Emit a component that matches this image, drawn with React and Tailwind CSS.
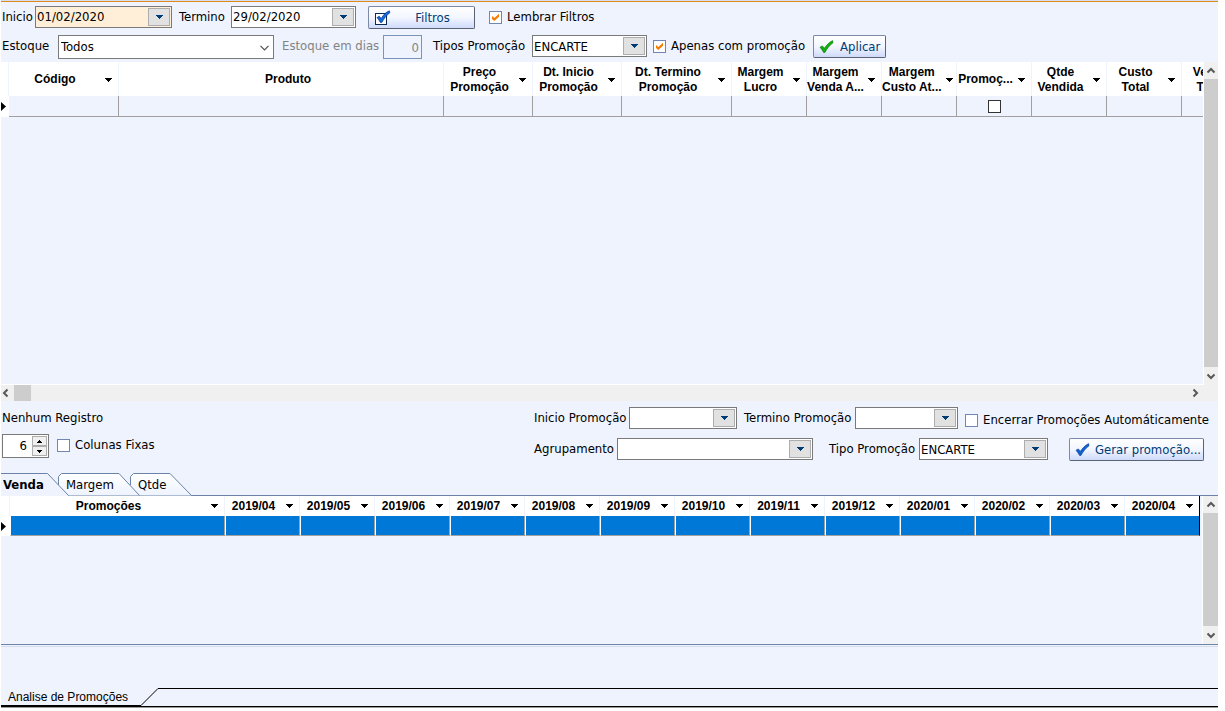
import React, { useState } from 'react';

const productColumns = [
  { lines: ['Código'], width: 'w-[110px]', menu: true },
  { lines: ['Produto'], width: 'w-[325px]', menu: false },
  { lines: ['Preço', 'Promoção'], width: 'w-[89px]', menu: true },
  { lines: ['Dt. Inicio', 'Promoção'], width: 'w-[89px]', menu: true },
  { lines: ['Dt. Termino', 'Promoção'], width: 'w-[110px]', menu: true },
  { lines: ['Margem', 'Lucro'], width: 'w-[75px]', menu: true },
  { lines: ['Margem', 'Venda A...'], width: 'w-[75px]', menu: true },
  { lines: ['Margem', 'Custo At...'], width: 'w-[75px]', menu: true },
  { lines: ['Promoç...'], width: 'w-[75px]', menu: true, check: true },
  { lines: ['Qtde', 'Vendida'], width: 'w-[75px]', menu: true },
  { lines: ['Custo', 'Total'], width: 'w-[75px]', menu: true },
  { lines: ['Venda', 'Total'], width: 'w-[75px]', menu: true }
];

const months = [
  '2019/04', '2019/05', '2019/06', '2019/07', '2019/08', '2019/09', '2019/10',
  '2019/11', '2019/12', '2020/01', '2020/02', '2020/03', '2020/04'
];

const DownArrow = ({ className }) => (
  <svg className={className} width="7" height="4" viewBox="0 0 7 4" shapeRendering="crispEdges" fill="currentColor">
    <path d="M0 0h7v1H0zM1 1h5v1H1zM2 2h3v1H2zM3 3h1v1H3z" />
  </svg>
);

const SpinArrow = ({ className }) => (
  <svg className={className} width="5" height="3" viewBox="0 0 5 3" shapeRendering="crispEdges">
    <path d="M0 0h5v1H0zM1 1h3v1H1zM2 2h1v1H2z" />
  </svg>
);

const arrowBox = 'flex w-[22px] items-center justify-center border border-[#adadad] bg-[#e1e1e1] text-[#003c74]';

const Label = ({ htmlFor, className, children }) => (
  <label htmlFor={htmlFor} className={`shrink-0 whitespace-nowrap leading-[22px] ${className}`}>{children}</label>
);

const DateField = ({ id, value, className }) => (
  <div className={`flex h-[22px] shrink-0 border border-[#7a7a7a] p-px ${className}`}>
    <input id={id} type="text" defaultValue={value} className="min-w-0 flex-1 bg-transparent outline-none" />
    <button type="button" aria-label="Abrir calendário" className={arrowBox}><DownArrow /></button>
  </div>
);

const SelectField = ({ id, value, className }) => (
  <div className={`relative flex h-[22px] shrink-0 border border-[#7a7a7a] bg-white p-px ${className}`}>
    <select id={id} defaultValue={value} className="min-w-0 flex-1 appearance-none bg-transparent outline-none">
      <option>{value}</option>
    </select>
    <span className={`pointer-events-none absolute inset-y-px right-px ${arrowBox}`}><DownArrow /></span>
  </div>
);

const CheckField = ({ label, checked, className }) => (
  <label className={`flex shrink-0 items-center gap-[5px] whitespace-nowrap ${className}`}>
    <span className="relative flex h-[13px] w-[13px]">
      <input type="checkbox" defaultChecked={checked} className="peer h-[13px] w-[13px] appearance-none border border-[#7187b2] bg-white" />
      <svg className="pointer-events-none absolute inset-0 hidden peer-checked:block" width="13" height="13" viewBox="0 0 13 13">
        <path d="M3 5l2.300 2L10 2.800v3L5.300 10 3 8z" fill="#f57c00" />
      </svg>
    </span>
    {label}
  </label>
);

const PushButton = ({ className, children }) => (
  <button type="button" className={`flex h-[23px] shrink-0 items-center whitespace-nowrap rounded-[2px] border border-[#7c89a8] border-b-[#5b6272] border-r-[#5b6272] bg-gradient-to-b from-white via-[#f3f6ff] to-[#cfdafb] text-[#003c74] ${className}`}>
    {children}
  </button>
);

const TickIcon = ({ color, edge }) => (
  <svg width="15" height="15" viewBox="0 0 15 15">
    <path d="M1 8.200l2.300-1.300 2.200 2.300C7.700 6 10.200 3.200 13.600 1.600l.4 2.200C10.600 6.400 8.200 9.500 6 13.400l-1.400.1C3.600 11.600 2.400 10 1 8.200z" fill={color} stroke={edge} strokeWidth=".6" />
  </svg>
);

const FilterIcon = () => (
  <svg width="17" height="16" viewBox="0 0 17 16">
    <rect x="1.500" y="3.500" width="11" height="11" fill="#fff" stroke="#0b2a57" />
    <path d="M3 7.600l2.300-1.400 1.900 2.300C9.200 5 11.800 2.200 15.400.8l.5 1.900C12.500 5.200 10 8.400 8 12.300l-1.700.1C5.400 10.600 4.300 9 3 7.600z" fill="#1668dc" stroke="#07397f" strokeWidth=".7" />
  </svg>
);

const chevrons = {
  up: 'M1.500 6.500L5 3l3.500 3.500',
  down: 'M1.500 3.500L5 7l3.500-3.500',
  left: 'M6.500 1.500L3 5l3.500 3.500',
  right: 'M3.500 1.500L7 5 3.500 8.500'
};

const Chevron = ({ dir }) => (
  <svg width="10" height="10" viewBox="0 0 10 10" fill="none" stroke="#585858" strokeWidth="2">
    <path d={chevrons[dir]} />
  </svg>
);

const VerticalScroll = ({ className }) => (
  <div className={`flex shrink-0 flex-col bg-[#f0f0f0] ${className}`}>
    <button type="button" aria-label="Rolar para cima" className="flex h-[17px] items-center justify-center"><Chevron dir="up" /></button>
    <div className="flex-1 bg-[#cdcdcd]" />
    <button type="button" aria-label="Rolar para baixo" className="flex h-[18px] items-center justify-center"><Chevron dir="down" /></button>
  </div>
);

const RowMarker = () => (
  <svg width="5" height="9" viewBox="0 0 5 9" className="block"><path d="M0 0l5 4.500L0 9z" /></svg>
);

const HeaderCell = ({ lines, menu }) => (
  <div className="flex items-center">
    <span className={`flex-1 whitespace-nowrap ${menu ? '' : 'pl-[14px]'}`}>
      {lines.map((line) => <span key={line} className="block">{line}</span>)}
    </span>
    {menu && <DownArrow className="ml-1 mr-[6px] shrink-0" />}
  </div>
);

const ProductGrid = () => (
  <div className="flex min-h-0 flex-1 flex-col">
    <div className="flex min-h-0 flex-1">
      <div className="min-w-0 flex-1 overflow-hidden border-b border-white">
        <table className="w-[1256px] table-fixed border-separate border-spacing-0">
          <thead>
            <tr className="h-[34px] bg-white font-['Liberation_Sans',Arial,sans-serif] text-[12px] leading-[15px]">
              <th className="w-2 border-r border-[#eef3fe]" />
              {productColumns.map((col, i) => (
                <th key={i} className={`border-r border-[#eef3fe] p-0 pt-px font-bold ${col.width}`}>
                  <HeaderCell lines={col.lines} menu={col.menu} />
                </th>
              ))}
            </tr>
          </thead>
          <tbody>
            <tr className="h-[21px]">
              <td className="bg-white p-0"><RowMarker /></td>
              {productColumns.map((col, i) => (
                <td key={i} className="border-b border-r border-[#a0a0a0] p-0">
                  {col.check && <input type="checkbox" aria-label="Promoção" className="mx-auto block h-[13px] w-[13px] appearance-none border border-[#333] bg-white" />}
                </td>
              ))}
            </tr>
          </tbody>
        </table>
      </div>
      <VerticalScroll className="w-[15px] border-l border-white" />
    </div>
    <div className="flex h-4 bg-[#f0f0f0] pr-[18px]">
      <button type="button" aria-label="Rolar para a esquerda" className="flex w-[13px] items-center justify-start"><Chevron dir="left" /></button>
      <div className="w-[17px] bg-[#cdcdcd]" />
      <button type="button" aria-label="Rolar para a direita" className="ml-auto flex items-center"><Chevron dir="right" /></button>
    </div>
  </div>
);

const MonthGrid = () => (
  <div className="flex h-[148px]">
    <div className="min-w-0 flex-1 overflow-hidden">
      <table className="w-[1199px] table-fixed border-separate border-spacing-0">
        <thead>
          <tr className="h-5 bg-white font-['Liberation_Sans',Arial,sans-serif] text-[12px] leading-[15px]">
            <th className="w-[9px] border-r border-[#eef3fe]" />
            <th className="w-[215px] border-r border-[#eef3fe] p-0 font-bold"><HeaderCell lines={['Promoções']} menu /></th>
            {months.map((month) => (
              <th key={month} className="w-[75px] border-r border-[#eef3fe] p-0 font-bold last:border-black">
                <HeaderCell lines={[month]} menu />
              </th>
            ))}
          </tr>
        </thead>
        <tbody>
          <tr className="h-5">
            <td className="bg-white p-0"><RowMarker /></td>
            <td className="border-b border-l border-r border-b-[#a0a0a0] border-l-white border-r-[#a0a0a0] bg-[#0078d7]" />
            {months.map((month) => (
              <td key={month} className="border-b border-l border-r border-b-[#a0a0a0] border-l-white border-r-[#a0a0a0] bg-[#0078d7] last:border-r-black" />
            ))}
          </tr>
        </tbody>
      </table>
    </div>
    <VerticalScroll className="w-4 border-l border-white" />
  </div>
);

const App = () => {
  const [tab, setTab] = useState('Venda');

  return (
    <div className="flex h-screen flex-col overflow-hidden bg-white pb-[3px] pl-px pr-[7px] font-['DejaVu_Sans_Condensed',Tahoma,sans-serif] text-[13px] text-black">
      <div className="flex min-h-0 flex-1 flex-col bg-[#eef3fe]">
        {/* Filter bar */}
        <div className="border-t border-[#d5dff0]" />
        <div className="border-t border-[#e08a1a]" />
        <div className="flex h-[27px] items-start pl-px pt-1">
          <Label htmlFor="inicio" className="w-[33px]">Inicio</Label>
          <DateField id="inicio" value="01/02/2020" className="w-[137px] bg-[#ffefd8]" />
          <Label htmlFor="termino" className="ml-[7px] w-[52px]">Termino</Label>
          <DateField id="termino" value="29/02/2020" className="w-[125px] bg-white" />
          <PushButton className="ml-3 w-[107px] pl-[5px]">
            <FilterIcon />
            <span className="flex-1">Filtros</span>
          </PushButton>
          <CheckField label="Lembrar Filtros" checked className="ml-[14px] h-[22px]" />
        </div>
        <div className="mb-[3px] mt-[6px] flex items-start pl-px">
          <Label htmlFor="estoque" className="w-[56px]">Estoque</Label>
          <div className="relative flex h-6 w-[216px] shrink-0 border border-[#7a7a7a] bg-white">
            <select id="estoque" defaultValue="Todos" className="min-w-0 flex-1 appearance-none bg-transparent pl-[2px] outline-none">
              <option>Todos</option>
            </select>
            <svg className="pointer-events-none absolute right-1 top-[9px]" width="9" height="6" viewBox="0 0 9 6" fill="none" stroke="#505050" strokeWidth="1.200"><path d="M.5.8l4 4 4-4" /></svg>
          </div>
          <Label htmlFor="dias" className="ml-2 w-[101px] text-[#838383]">Estoque em dias</Label>
          <input id="dias" type="text" defaultValue="0" disabled className="h-6 w-[39px] shrink-0 border border-[#7a93b8] bg-transparent pr-[2px] text-right text-[#838383]" />
          <Label htmlFor="tipos" className="ml-[11px] w-[99px]">Tipos Promoção</Label>
          <SelectField id="tipos" value="ENCARTE" className="w-[115px]" />
          <CheckField label="Apenas com promoção" checked className="ml-[6px] h-[22px] w-[160px]" />
          <PushButton className="w-[73px] gap-[6px] pl-[5px]">
            <TickIcon color="#10b010" edge="#087008" />
            Aplicar
          </PushButton>
        </div>

        <ProductGrid />

        {/* Promotion form */}
        <div className="mb-3 mt-[6px] flex pl-px">
          <div className="w-[532px] shrink-0">
            <p className="leading-[22px]">Nenhum Registro</p>
            <div className="mt-[5px] flex items-start">
              <div className="flex h-6 w-[47px] border border-[#7a7a7a] bg-white p-px">
                <input type="text" aria-label="Quantidade de colunas fixas" defaultValue="6" className="min-w-0 flex-1 pr-[5px] text-right outline-none" />
                <div className="flex w-[15px] flex-col">
                  <button type="button" aria-label="Aumentar" className="flex flex-1 items-center justify-center border border-[#adadad] bg-[#f0f0f0]">
                    <SpinArrow className="rotate-180" />
                  </button>
                  <button type="button" aria-label="Diminuir" className="flex flex-1 items-center justify-center border border-[#adadad] bg-[#f0f0f0]">
                    <SpinArrow />
                  </button>
                </div>
              </div>
              <CheckField label="Colunas Fixas" className="ml-2 h-[22px]" />
            </div>
          </div>
          <div className="flex flex-col gap-[9px]">
            <div className="flex h-[22px] items-start">
              <Label htmlFor="inicioPromo" className="w-[95px]">Inicio Promoção</Label>
              <DateField id="inicioPromo" value="" className="w-[108px] bg-white" />
              <Label htmlFor="terminoPromo" className="ml-[7px] w-[111px]">Termino Promoção</Label>
              <DateField id="terminoPromo" value="" className="w-[103px] bg-white" />
              <CheckField label="Encerrar Promoções Automáticamente" className="ml-[7px] h-[26px]" />
            </div>
            <div className="flex items-start">
              <Label htmlFor="agrupamento" className="w-[83px]">Agrupamento</Label>
              <SelectField id="agrupamento" value="" className="w-[196px]" />
              <Label htmlFor="tipo" className="ml-4 w-[90px]">Tipo Promoção</Label>
              <SelectField id="tipo" value="ENCARTE" className="w-[129px]" />
              <PushButton className="ml-[21px] w-[135px] gap-[5px] pl-[5px]">
                <TickIcon color="#1060d0" edge="#063c90" />
                Gerar promoção...
              </PushButton>
            </div>
          </div>
        </div>

        {/* Month tabs */}
        <div className="relative h-[23px]">
          <svg className="absolute left-0 top-0" width="192" height="23" viewBox="0 0 192 23" fill="none" stroke="#6b83a8">
            <defs>
              <linearGradient id="tabFill" x1="0" y1="0" x2="0" y2="1">
                <stop offset="0" stopColor="#fff" />
                <stop offset="1" stopColor="#eef3fe" />
              </linearGradient>
            </defs>
            <path d="M129.500 12V3.500l3-3H169L190.500 22.500H138.500z" fill="url(#tabFill)" stroke="none" />
            <path d="M129.500 12V3.500l3-3H169L190.500 22.500" />
            <path d="M57.500 12V3.500l3-3H118L138.500 22.500H67.500z" fill="url(#tabFill)" stroke="none" />
            <path d="M57.500 12V3.500l3-3H118L138.500 22.500" />
            <path d="M0 .5H46.500L67.500 22.500" />
          </svg>
          <div className="relative flex h-[22px] items-end leading-[20px]">
            {[
              { name: 'Venda', width: 'w-[64px] pl-[2px]' },
              { name: 'Margem', width: 'w-[72px] pl-px' },
              { name: 'Qtde', width: 'w-[50px] pl-px' }
            ].map(({ name, width }) => (
              <button key={name} type="button" onClick={() => setTab(name)} className={`text-left ${width} ${tab === name ? 'font-bold' : ''}`}>
                {name}
              </button>
            ))}
          </div>
          <div className="ml-[67px] border-t border-[#6b83a8]" />
        </div>
        <MonthGrid />

        {/* Window tab */}
        <div className="border-b border-t border-b-[#d5dbea] border-t-[#6b83a8] pb-px" />
        <div className="mt-[41px] flex h-5 border-b border-[#9a9a9a]">
          <a href="#" className="flex w-[140px] items-center border-b-2 border-black pl-[7px] font-['Liberation_Sans',Arial,sans-serif] text-[12px] leading-4 text-black">Analise de Promoções</a>
          <svg width="17" height="19" viewBox="0 0 17 19" fill="none" stroke="#000"><path d="M0 17.500L17 .5M0 18.500h17" /></svg>
          <div className="flex-1 border-y border-black" />
        </div>
      </div>
    </div>
  );
};

export default App;
